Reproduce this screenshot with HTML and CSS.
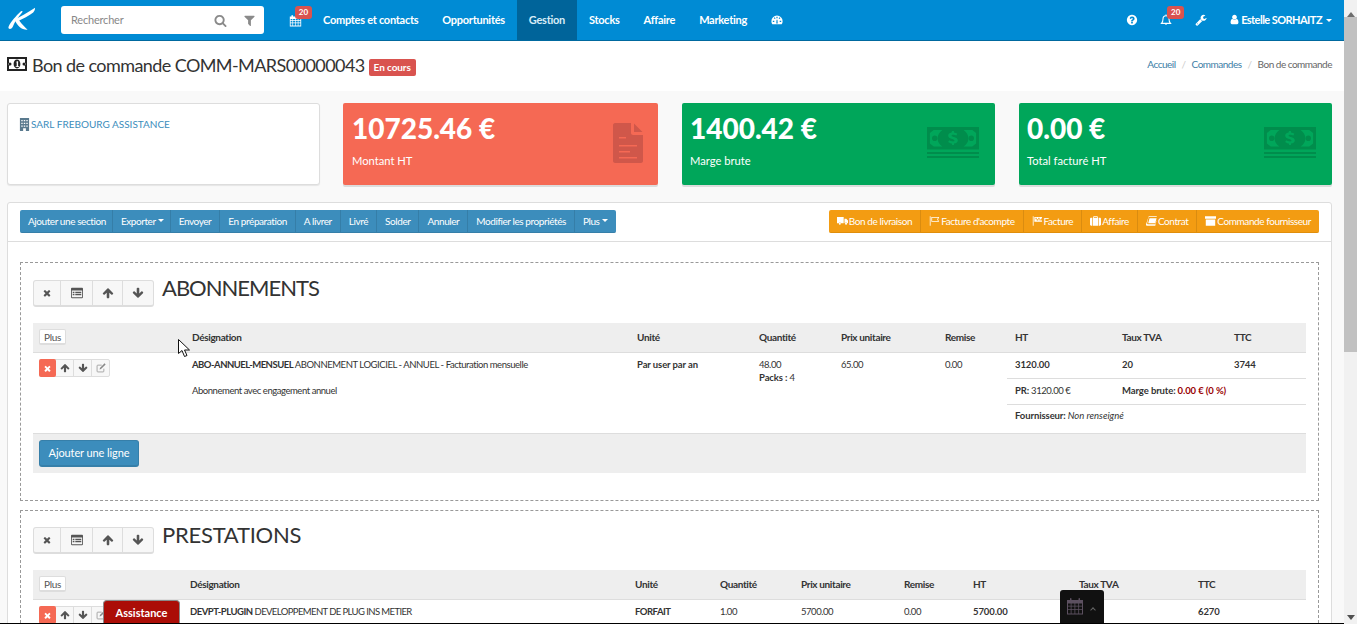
FILE: index.html
```html
<!DOCTYPE html>
<html lang="fr">
<head>
<meta charset="utf-8">
<title>Bon de commande</title>
<link rel="stylesheet" href="styles.css">
</head>
<body>
<svg class="sprite" xmlns="http://www.w3.org/2000/svg">
  <symbol id="i-search" viewBox="0 0 1792 1792"><path d="M1216 832q0-185-131.500-316.500t-316.500-131.500-316.500 131.500-131.500 316.500 131.500 316.500 316.500 131.500 316.500-131.500 131.500-316.500zm512 832q0 52-38 90t-90 38q-54 0-90-38l-343-342q-179 124-399 124-143 0-273.500-55.500t-225-150-150-225-55.500-273.500 55.500-273.500 150-225 225-150 273.500-55.500 273.500 55.500 225 150 150 225 55.500 273.500q0 220-124 399l343 343q37 37 37 90z"/></symbol>
  <symbol id="i-filter" viewBox="0 0 1792 1792"><path d="M1595 295q17 41-14 70l-493 493v742q0 42-39 59-13 5-25 5-27 0-45-19l-256-256q-19-19-19-45v-486l-493-493q-31-29-14-70 17-39 59-39h1280q42 0 59 39z"/></symbol>
  <symbol id="i-user" viewBox="0 0 1792 1792"><path d="M1536 1399q0 109-62.500 187t-150.500 78h-854q-88 0-150.500-78t-62.500-187q0-85 8.500-160.500t31.500-152 58.500-131 94-89 134.500-34.500q131 128 313 128t313-128q76 0 134.500 34.500t94 89 58.500 131 31.500 152 8.500 160.500zm-256-887q0 159-112.500 271.500t-271.500 112.500-271.500-112.500-112.500-271.500 112.500-271.500 271.500-112.500 271.500 112.500 112.500 271.500z"/></symbol>
  <symbol id="i-times" viewBox="0 0 1792 1792"><path d="M1490 1322q0 40-28 68l-136 136q-28 28-68 28t-68-28l-294-294-294 294q-28 28-68 28t-68-28l-136-136q-28-28-28-68t28-68l294-294-294-294q-28-28-28-68t28-68l136-136q28-28 68-28t68 28l294 294 294-294q28-28 68-28t68 28l136 136q28 28 28 68t-28 68l-294 294 294 294q28 28 28 68z"/></symbol>
  <symbol id="i-up" viewBox="0 0 1792 1792"><path d="M1675 971q0 51-37 90l-75 75q-38 38-91 38-54 0-90-38l-294-293v704q0 52-37.500 84.500t-90.500 32.500h-128q-53 0-90.500-32.500t-37.500-84.500v-704l-294 293q-36 38-90 38t-90-38l-75-75q-38-38-38-90 0-53 38-91l651-651q35-37 90-37 54 0 91 37l651 651q37 39 37 91z"/></symbol>
  <symbol id="i-down" viewBox="0 0 1792 1792"><path d="M1675 832q0 53-37 90l-651 652q-39 37-91 37-53 0-90-37l-651-652q-38-36-38-90 0-53 38-91l74-75q39-37 91-37 53 0 90 37l294 294v-704q0-52 38-90t90-38h128q52 0 90 38t38 90v704l294-294q37-37 90-37 52 0 91 37l75 75q37 39 37 91z"/></symbol>
  <symbol id="i-help" viewBox="0 0 1792 1792"><path d="M1024 1376v-192q0-14-9-23t-23-9h-192q-14 0-23 9t-9 23v192q0 14 9 23t23 9h192q14 0 23-9t9-23zm256-672q0-88-55.500-163t-138.500-116-170-41q-243 0-371 213-15 24 8 42l132 100q7 6 19 6 16 0 25-12 53-68 86-92 34-24 86-24 48 0 85.500 26t37.500 59q0 38-20 61t-68 45q-63 28-115.500 86.500t-52.500 125.500v36q0 14 9 23t23 9h192q14 0 23-9t9-23q0-19 21.500-49.500t54.500-49.500q32-18 49-28.500t46-35 44.500-48 28-60.500 12.500-81zm384 192q0 209-103 385.500t-279.500 279.500-385.500 103-385.500-103-279.500-279.500-103-385.500 103-385.500 279.500-279.500 385.500-103 385.500 103 279.500 279.500 103 385.500z"/></symbol>
  <symbol id="i-wrench" viewBox="0 0 1792 1792"><path d="M448 1472q0-26-19-45t-45-19-45 19-19 45 19 45 45 19 45-19 19-45zm644-420l-682 682q-37 37-90 37-52 0-91-37l-106-108q-38-36-38-90 0-53 38-91l681-681q39 98 114.500 173.500t173.500 114.500zm634-435q0 39-23 106-47 134-164.500 217.500t-258.500 83.500q-185 0-316.500-131.500t-131.500-316.500 131.500-316.500 316.500-131.500q58 0 121.500 16.500t107.500 46.500q16 11 16 28t-16 28l-293 169v224l193 107q5-3 79-48.500t135.500-81 70.500-35.500q15 0 23.500 10t8.500 25z"/></symbol>
  <symbol id="i-bell" viewBox="0 0 16 16"><path fill="none" stroke="currentColor" stroke-width="1.4" d="M2 12.500c1.500-1.500 2-3 2-6 0-2.500 1.800-4.300 4-4.300s4 1.800 4 4.300c0 3 .5 4.500 2 6z"/><path d="M6.500 13.500a1.600 1.600 0 0 0 3 0zM7.300 .6h1.400v1.500H7.300z"/></symbol>
  <symbol id="i-cal" viewBox="0 0 16 16"><path fill-rule="evenodd" d="M1 3h2V1.500h2V3h6V1.500h2V3h2v12.500H1zM2 6v1.800h2.200V6zm3 0v1.800h2.500V6zm3.300 0v1.800h2.500V6zm3.300 0v1.800H14V6zM2 8.600v2h2.200v-2zm3 0v2h2.500v-2zm3.300 0v2h2.500v-2zm3.300 0v2H14v-2zM2 11.400v2.900h2.200v-2.900zm3 0v2.900h2.500v-2.900zm3.300 0v2.900h2.500v-2.900zm3.300 0v2.900H14v-2.900z"/></symbol>
  <symbol id="i-gauge" viewBox="0 0 16 16"><path fill-rule="evenodd" d="M8 2a7.500 7.500 0 0 0-7.500 7.500c0 1.600.5 3.100 1.300 4.300h12.400c.8-1.200 1.300-2.700 1.300-4.300A7.500 7.500 0 0 0 8 2zM7.200 3.600h1.600v2H7.200zM3.700 5.200l1.200-.9 1.200 1.600-1.200.9zM2.400 9h2v1.500h-2zm9.200 0h2v1.500h-2zm-1.400-3.100 1.200-1.600 1.200.9-1.200 1.600zM7 12.500l.4-5h1.200l.4 5z"/></symbol>
  <symbol id="i-money" viewBox="0 0 20 14"><path fill-rule="evenodd" d="M0 0h20v14H0zm2 2v10h16V2zm8 .6c2 0 3.400 2 3.400 4.400s-1.400 4.400-3.400 4.400S6.600 9.400 6.600 7 8 2.600 10 2.600zM9 5l1.200-.8h.9v5h1v.8H8.700v-.8h1V5.600zM3 5.500a1.500 1.500 0 1 1 0 3 1.500 1.500 0 0 1 0-3zm14 0a1.500 1.500 0 1 1 0 3 1.500 1.500 0 0 1 0-3z"/></symbol>
  <symbol id="i-cash" viewBox="0 0 54 32" preserveAspectRatio="none"><path fill-rule="evenodd" d="M0 0h54v22.500H0zM3 6l4-3h9c-3 2-5 5-5 8.500s2 6 5 8H7l-4-3zm48 0-4-3h-9c3 2 5 5 5 8.500s-2 6-5 8h9l4-3zM26 4h2v1.500c1.500.2 2.500.6 3.500 1.300l-1 1.800c-1.500-.8-5-1.500-5 0 0 2 6.500 1 6.500 5 0 1.500-1.300 2.800-4 3V18h-2v-1.400c-1.500-.2-3-.8-4-1.600l1-1.800c1.500 1 5.500 2 5.500.3 0-2-6.500-1-6.500-5 0-1.500 1.300-2.700 3.500-3zM0 25h54v2H0zm0 4h54v2H0z"/><circle cx="8" cy="11.200" r="2.800"/><circle cx="46" cy="11.200" r="2.800"/></symbol>
  <symbol id="i-file" viewBox="0 0 30 40"><path fill-rule="evenodd" d="M2 0h16v10c0 1 1 2 2 2h10v26c0 1-1 2-2 2H2c-1 0-2-1-2-2V2C0 1 1 0 2 0zm4 14v1.500h7V14zm0 8v1.500h18V22zm0 6v1.500h11V28zm0 6v1.500h18V34zM21 .5 29.500 9H21z"/></symbol>
  <symbol id="i-building" viewBox="0 0 12 14"><path fill-rule="evenodd" d="M1 0h10v14H1zm1.500 2v1.500H4V2zm2.700 0v1.500h1.600V2zM8 2v1.500h1.500V2zM2.500 5v1.500H4V5zm2.700 0v1.500h1.600V5zM8 5v1.500h1.500V5zM2.500 8v1.500H4V8zm2.700 0v1.500h1.600V8zM8 8v1.500h1.500V8zM4.500 11v3h3v-3z"/></symbol>
  <symbol id="i-truck" viewBox="0 0 14 12"><path d="M0 1h8.500v8H5.300a1.800 1.800 0 0 0-3.400 0H0zM9.500 3h2.300L14 5.500V9h-.8a1.800 1.800 0 0 0-3.400 0h-.3zM3.600 8.300a1.300 1.300 0 1 1 0 2.600 1.300 1.300 0 0 1 0-2.600zm7.900 0a1.300 1.300 0 1 1 0 2.600 1.300 1.300 0 0 1 0-2.600z"/></symbol>
  <symbol id="i-flag" viewBox="0 0 14 12"><path fill-rule="evenodd" d="M1 0h1v12H1zm2 1h10l-1.500 3L13 7H3zm1 1v4h7.400l-1-2 1-2z"/></symbol>
  <symbol id="i-flagc" viewBox="0 0 14 12"><path fill-rule="evenodd" d="M1 0h1v12H1zm2 1h10l-1.500 3L13 7H3zm1.500 1v1.700H6V2zM8 2v1.700h1.600V2zM6 3.700v1.600h2V3.700zm3.600 0v1.600h1.500V3.700z"/></symbol>
  <symbol id="i-suit" viewBox="0 0 14 12"><path fill-rule="evenodd" d="M4 2V.8C4 .4 4.400 0 4.800 0h4.400c.4 0 .8.400.8.800V2h2.500c.8 0 1.500.7 1.500 1.500v7c0 .8-.7 1.500-1.500 1.500h-11C.7 12 0 11.300 0 10.500v-7C0 2.700.7 2 1.500 2zm1-1v1h4V1zM3 2v10h.8V2zm7.200 0v10h.8V2z"/></symbol>
  <symbol id="i-book" viewBox="0 0 14 12"><path d="M3.500 0H14l-.6 1H4.600c-1 0-1.400.7-1.700 1.700l-1.400 6c-.2.800.2 1.300 1 1.300h9.400l.9-3.800.7-1.200L11.800 12H1.500C.5 12-.2 11 0 10zM4.500 2.500h9l-1.800 6.500H2.800z"/></symbol>
  <symbol id="i-list" viewBox="0 0 14 12"><path d="M0 0h14v3H0zM1 4h12v8H1z"/></symbol>
  <symbol id="i-listalt" viewBox="0 0 14 12"><path fill-rule="evenodd" d="M1 0h12c.6 0 1 .4 1 1v10c0 .6-.4 1-1 1H1c-.6 0-1-.4-1-1V1c0-.6.4-1 1-1zm0 3v8h12V3zm1 1.500h2V6H2zm3 0h7V6H5zM2 7h2v1.500H2zm3 0h7v1.500H5z"/></symbol>
  <symbol id="i-edit" viewBox="0 0 14 14"><path fill="none" stroke="currentColor" stroke-width="1" d="M11 8v3.500c0 .6-.5 1-1 1H2.500c-.6 0-1-.4-1-1V4c0-.6.4-1 1-1H8"/><path d="M12 .5 13.500 2 7 8.500 5 9l.5-2z"/></symbol>
  <symbol id="i-calo" viewBox="0 0 18 18"><path fill-rule="evenodd" d="M1 3h3V1.500c0-.8 1.500-.8 1.500 0V3h7V1.500c0-.8 1.500-.8 1.500 0V3h3v14.500H1zM2 6.500v2.300h2.700V6.500zm3.500 0v2.300h3V6.500zm3.800 0v2.300h3V6.500zm3.800 0v2.300H16V6.500zM2 9.600v2.700h2.700V9.600zm3.500 0v2.700h3V9.600zm3.800 0v2.700h3V9.600zm3.800 0v2.700H16V9.600zM2 13.100v3.400h2.700v-3.400zm3.500 0v3.400h3v-3.400zm3.800 0v3.400h3v-3.400zm3.800 0v3.400H16v-3.400z"/></symbol>
</svg>

<div class="app">
  <div class="page">
    <nav class="navbar">
      <a class="brand">
        <svg class="logo" viewBox="0 0 30 26"><path d="M13 5C9 9 3 15 .5 21c-.5 2.500 3 3 4.500 0C7 16 11 10 15.500 5c.3-1.500-1.500-1.200-2.500 0z"/><path d="M7 13c6-3 14-7 22-12.500 0 2-.5 3.500-2 5-5 4-11 6.500-15 8.500 3 4 6 7 9 10-6 .5-11-4-14-11z"/></svg>
      </a>
      <div class="search">
        <span class="search-input">Rechercher</span>
        <span class="search-btn"><svg class="ic ic-13"><use href="#i-search"/></svg></span>
        <span class="search-btn"><svg class="ic ic-13"><use href="#i-filter"/></svg></span>
      </div>
      <ul class="menu">
        <li class="menu-icon cal-item"><svg class="ic ic-13"><use href="#i-cal"/></svg><span class="badge-n">20</span></li>
        <li>Comptes et contacts</li>
        <li>Opportunités</li>
        <li class="active">Gestion</li>
        <li>Stocks</li>
        <li>Affaire</li>
        <li>Marketing</li>
        <li class="menu-icon"><svg class="ic ic-12"><use href="#i-gauge"/></svg></li>
      </ul>
      <ul class="menu menu-right">
        <li class="menu-icon help-item"><svg class="ic ic-12"><use href="#i-help"/></svg></li>
        <li class="menu-icon bell-item"><svg class="ic ic-12"><use href="#i-bell"/></svg><span class="badge-n">20</span></li>
        <li class="menu-icon wrench-item"><svg class="ic ic-12"><use href="#i-wrench"/></svg></li>
        <li class="user"><svg class="ic ic-11"><use href="#i-user"/></svg>Estelle SORHAITZ<i class="caret"></i></li>
      </ul>
    </nav>

    <header class="head">
      <div class="head-title">
        <svg class="ic money"><use href="#i-money"/></svg>
        <h1>Bon de commande COMM-MARS00000043</h1>
        <span class="status">En cours</span>
      </div>
      <ol class="crumbs">
        <li><a>Accueil</a></li>
        <li class="sep">/</li>
        <li><a>Commandes</a></li>
        <li class="sep">/</li>
        <li>Bon de commande</li>
      </ol>
    </header>

    <main class="content">
      <section class="stats">
        <div class="client"><svg class="ic building"><use href="#i-building"/></svg><a>SARL FREBOURG ASSISTANCE</a></div>
        <div class="stat red">
          <strong>10725.46 €</strong><span>Montant HT</span>
          <svg class="ic stat-file"><use href="#i-file"/></svg>
        </div>
        <div class="stat green">
          <strong>1400.42 €</strong><span>Marge brute</span>
          <svg class="ic stat-cash"><use href="#i-cash"/></svg>
        </div>
        <div class="stat green">
          <strong>0.00 €</strong><span>Total facturé HT</span>
          <svg class="ic stat-cash"><use href="#i-cash"/></svg>
        </div>
      </section>

      <section class="panel">
        <div class="toolbar">
          <div class="btns blue">
            <a>Ajouter une section</a>
            <a>Exporter<i class="caret"></i></a>
            <a>Envoyer</a>
            <a>En préparation</a>
            <a>A livrer</a>
            <a>Livré</a>
            <a>Solder</a>
            <a>Annuler</a>
            <a>Modifier les propriétés</a>
            <a>Plus<i class="caret"></i></a>
          </div>
          <div class="btns orange">
            <a><svg class="ic ic-t"><use href="#i-truck"/></svg>Bon de livraison</a>
            <a><svg class="ic ic-t"><use href="#i-flag"/></svg>Facture d'acompte</a>
            <a><svg class="ic ic-t"><use href="#i-flagc"/></svg>Facture</a>
            <a><svg class="ic ic-t"><use href="#i-suit"/></svg>Affaire</a>
            <a><svg class="ic ic-t"><use href="#i-book"/></svg>Contrat</a>
            <a><svg class="ic ic-t"><use href="#i-list"/></svg>Commande fournisseur</a>
          </div>
        </div>

        <div class="panel-body">
          <article class="block">
            <div class="block-head">
              <div class="tools">
                <a class="t1"><svg class="ic ic-10"><use href="#i-times"/></svg></a>
                <a class="t2"><svg class="ic ic-12"><use href="#i-listalt"/></svg></a>
                <a class="t3"><svg class="ic ic-12"><use href="#i-up"/></svg></a>
                <a class="t4"><svg class="ic ic-12"><use href="#i-down"/></svg></a>
              </div>
              <h2 class="h-abo">ABONNEMENTS</h2>
            </div>
            <div class="thead cols-a">
              <div class="cell-plus"><a class="plus">Plus</a></div>
              <div>Désignation</div><div>Unité</div><div>Quantité</div><div>Prix unitaire</div><div>Remise</div><div>HT</div><div>Taux TVA</div><div>TTC</div>
            </div>
            <div class="trow rows-a">
              <div class="cell-act">
                <div class="mini">
                  <a class="del"><svg class="ic ic-9"><use href="#i-times"/></svg></a>
                  <a><svg class="ic ic-10"><use href="#i-up"/></svg></a>
                  <a><svg class="ic ic-10"><use href="#i-down"/></svg></a>
                  <a><svg class="ic ic-10 light"><use href="#i-edit"/></svg></a>
                </div>
              </div>
              <div class="cell"><p><b class="code">ABO-ANNUEL-MENSUEL</b> ABONNEMENT LOGICIEL - ANNUEL - Facturation mensuelle</p><p class="desc">Abonnement avec engagement annuel</p></div>
              <div class="cell"><b>Par user par an</b></div>
              <div class="cell"><p>48.00</p><p class="packs"><b>Packs :</b> 4</p></div>
              <div class="cell">65.00</div>
              <div class="cell">0.00</div>
              <div class="cell-right">
                <div class="sub sub-top"><b>3120.00</b><b>20</b><b>3744</b></div>
                <div class="sub sub-mid"><span><b>PR:</b> 3120.00 €</span><span class="marge"><b>Marge brute:</b> <b class="neg">0.00 € (0 %)</b></span></div>
                <div class="sub sub-last"><span><b>Fournisseur:</b> <em>Non renseigné</em></span></div>
              </div>
            </div>
            <div class="tfoot"><a class="add">Ajouter une ligne</a></div>
          </article>

          <article class="block">
            <div class="block-head">
              <div class="tools">
                <a class="t1"><svg class="ic ic-10"><use href="#i-times"/></svg></a>
                <a class="t2"><svg class="ic ic-12"><use href="#i-listalt"/></svg></a>
                <a class="t3"><svg class="ic ic-12"><use href="#i-up"/></svg></a>
                <a class="t4"><svg class="ic ic-12"><use href="#i-down"/></svg></a>
              </div>
              <h2 class="h-pre">PRESTATIONS</h2>
            </div>
            <div class="thead cols-b">
              <div class="cell-plus"><a class="plus">Plus</a></div>
              <div>Désignation</div><div>Unité</div><div>Quantité</div><div>Prix unitaire</div><div>Remise</div><div>HT</div><div>Taux TVA</div><div>TTC</div>
            </div>
            <div class="trow cols-b">
              <div class="cell-act">
                <div class="mini">
                  <a class="del"><svg class="ic ic-9"><use href="#i-times"/></svg></a>
                  <a><svg class="ic ic-10"><use href="#i-up"/></svg></a>
                  <a><svg class="ic ic-10"><use href="#i-down"/></svg></a>
                  <a><svg class="ic ic-10 light"><use href="#i-edit"/></svg></a>
                </div>
              </div>
              <div class="cell"><b class="code">DEVPT-PLUGIN</b> <span class="caps">DEVELOPPEMENT DE PLUG INS METIER</span></div>
              <div class="cell"><b class="code">FORFAIT</b></div>
              <div class="cell">1.00</div>
              <div class="cell">5700.00</div>
              <div class="cell">0.00</div>
              <div class="cell"><b>5700.00</b></div>
              <div class="cell"></div>
              <div class="cell"><b>6270</b></div>
            </div>
          </article>
        </div>
      </section>
    </main>

    <a class="assist">Assistance</a>
    <div class="dock"><svg class="ic dock-cal"><use href="#i-calo"/></svg><i class="chev"></i></div>
    <svg class="cursor" viewBox="0 0 13 18"><path d="M.5.5v14l3.500-3 2.500 6 2.500-1-2.500-5.500 5 0z" fill="#fff" stroke="#111" stroke-width="1"/></svg>
    <div class="edge"></div>
  </div>
  <div class="scrollbar">
    <i class="arrow-up"></i>
    <div class="thumb"></div>
    <i class="arrow-down"></i>
  </div>
</div>
</body>
</html>
```

FILE: styles.css
```css
* { box-sizing: border-box; }
html, body { margin: 0; height: 100%; overflow: hidden; }
body { font-family: "Lato", "Liberation Sans", sans-serif; font-size: 11px; color: #333; background: #f9f9f9; }
p, h1, h2, ul, ol { margin: 0; padding: 0; list-style: none; font-weight: 400; }
.sprite { display: none; }
.ic { display: inline-block; fill: currentColor; flex: none; }
.ic-9 { width: 9px; height: 9px; }
.ic-10 { width: 10px; height: 10px; }
.ic-11 { width: 11px; height: 11px; }
.ic-12 { width: 12px; height: 12px; }
.ic-13 { width: 13px; height: 13px; }
.ic-t { width: 11px; height: 10px; margin-right: 1px; }
.light { color: #888; }

.app { display: flex; height: 624px; }
.page { position: relative; width: 1344px; height: 624px; overflow: hidden; background: #f9f9f9; }

.scrollbar { width: 13px; background: #f1f1f1; display: flex; flex-direction: column; align-items: center; }
.thumb { width: 13px; height: 335px; background: #c1c1c1; }
.arrow-up { height: 17px; width: 0; border: 4px solid transparent; border-top-width: 6px; border-bottom: 5px solid #6e6e6e; border-top-color: transparent; }
.arrow-down { margin-top: 263px; width: 0; height: 0; border: 4px solid transparent; border-bottom: 0; border-top: 5px solid #505050; }

.navbar { display: flex; height: 41px; background: #008bd4; border-bottom: 1px solid #00699f; color: #fff; }
.brand { width: 61px; padding: 7px 0 0 8px; }
.logo { display: block; width: 28px; height: 25px; fill: #fff; }
.search { display: flex; width: 203px; height: 28px; margin-top: 6px; background: #fff; border-radius: 3px; color: #888; }
.search-input { flex: 1; padding-left: 10px; line-height: 28px; font-size: 11px; letter-spacing: -.2px; color: #888; }
.search-btn { width: 29px; display: flex; align-items: center; justify-content: center; color: #8a8a8a; }
.menu { display: flex; margin-left: 13px; height: 40px; font-size: 11px; font-weight: 700; letter-spacing: -.27px; }
.menu li { position: relative; padding: 0 12px; line-height: 40px; white-space: nowrap; }
.menu .active { background: #00649a; color: #d8ecf7; }
.menu-icon { display: flex; align-items: center; }
.cal-item { width: 34px; }
.badge-n { position: absolute; top: 6px; left: 18px; width: 17px; height: 13px; background: #d9534f; border-radius: 3px; color: #fff; font-size: 8px; font-weight: 700; letter-spacing: 0; line-height: 13px; text-align: center; }
.menu-right { margin-left: auto; margin-right: 0; }
.menu-right .help-item { padding: 0; margin-right: 22px; }
.menu-right .bell-item { padding: 0; margin-right: 23px; }
.bell-item .badge-n { left: 7px; }
.menu-right .wrench-item { padding: 0; margin-right: 22px; }
.menu-right .user { padding: 0 12px 0 0; letter-spacing: -.55px; }
.user .ic { margin-right: 1px; vertical-align: -1px; }
.caret { display: inline-block; width: 0; height: 0; margin-left: 4px; vertical-align: 2px; border: 3px solid transparent; border-bottom: 0; border-top: 3px solid currentColor; }

.head { display: flex; justify-content: space-between; align-items: center; height: 50px; padding: 0 12px 0 7px; background: #fff; }
.head-title { display: flex; align-items: center; }
.money { width: 20px; height: 14px; margin: -4px 5px 0 0; color: #222; }
h1 { font-size: 18px; letter-spacing: -.58px; color: #333; line-height: 24px; margin-top: -2px; }
.status { margin-left: 4px; margin-top: 3px; padding: 0 5px; height: 17px; line-height: 17px; background: #d9534f; border-radius: 2px; color: #fff; font-size: 10px; font-weight: 700; letter-spacing: -.1px; }
.crumbs { display: flex; font-size: 10px; letter-spacing: -.5px; color: #666; margin-top: -4px; }
.crumbs a { color: #3c7ea6; }
.sep { color: #ccc; margin: 0 6px; }

.content { padding: 12px 12px 0 7px; }
.stats { display: grid; grid-template-columns: 312px 315px 313px 313px; column-gap: 24px; height: 82px; margin-bottom: 17px; }
.client { margin-right: -1px; background: #fff; border: 1px solid #ddd; border-radius: 3px; box-shadow: 0 1px 1px rgba(0,0,0,.08); padding: 14px 11px; font-size: 10px; color: #3c8dbc; }
.building { width: 11px; height: 13px; margin-right: 1px; vertical-align: -3px; color: #5a7a8e; }
.stat { position: relative; border-radius: 2px; box-shadow: 0 2px 0 #dcdcdc; color: #fff; padding: 8px 9px; display: flex; flex-direction: column; }
.stat strong { font-size: 28px; line-height: 34px; font-weight: 900; }
.stat span { margin-top: 8px; font-size: 11.200px; line-height: 16px; }
.red { background: #f56954; }
.green { background: #00a65a; padding-left: 8px; }
.stat-file { position: absolute; right: 15px; top: 20px; width: 30px; height: 40px; color: #d0574a; }
.stat-cash { position: absolute; right: 16px; top: 24px; width: 52px; height: 32px; color: #008d4c; }

.panel { background: #fff; border: 1px solid #ddd; border-radius: 3px 3px 0 0; min-height: 480px; }
.toolbar { display: flex; justify-content: space-between; height: 39px; padding: 7px 12px 0; border-bottom: 1px solid #ddd; }
.btns { display: flex; height: 23px; border-radius: 2px; color: #fff; font-size: 10px; letter-spacing: -.42px; }
.btns a { display: flex; align-items: center; padding: 0 8px 1px; line-height: 22px; white-space: nowrap; }
.btns a + a { border-left: 1px solid rgba(0,0,0,.1); }
.blue a:first-child, .blue a:nth-child(2) { padding-right: 6px; }
.blue { background: #3c8dbc; border-bottom: 1px solid #367fa9; }
.orange { background: #f39c12; border-bottom: 1px solid #e08e0b; }
.btns .caret { margin-left: 2px; vertical-align: 1px; }

.panel-body { padding: 20px 12px 0; }
.block { border: 1px dashed #999; padding: 17px 12px 27px; margin-bottom: 9px; }
.block + .block { padding-top: 16px; }
.block-head { display: flex; height: 43px; }
.tools { display: flex; height: 27px; width: 121px; margin-right: 8px; border: 1px solid #ddd; border-bottom-width: 2px; border-radius: 3px; background: #f7f7f7; color: #555; }
.tools a { display: flex; align-items: center; justify-content: center; border-right: 1px solid #ddd; }
.tools a:last-child { border-right: 0; }
.t1 { width: 27px; } .t2 { width: 32px; } .t3 { width: 30px; } .t4 { flex: 1; }
h2 { font-size: 22px; height: 27px; line-height: 16px; color: #333; }
.h-abo { letter-spacing: -1px; }
.h-pre { letter-spacing: -.25px; }
.thead { display: grid; height: 30px; background: #eee; border-bottom: 1px solid #ddd; line-height: 29px; font-size: 10px; font-weight: 700; letter-spacing: -.35px; }
.thead > div:not(.cell-plus) { padding-left: 8px; }
.cell-plus { padding: 6px 0 0 6px; }
.plus { display: block; width: 27px; height: 16px; background: #fff; border: 1px solid #ddd; border-bottom-width: 2px; border-radius: 2px; font-size: 10px; font-weight: 400; line-height: 14px; text-align: center; color: #555; }
.cols-a { grid-template-columns: 151px 445px 122px 82px 104px 70px 107px 112px 80px; }
.cols-b { grid-template-columns: 149px 445px 85px 81px 103px 69px 106px 119px 116px; }
.trow { display: grid; height: 80px; font-size: 9.500px; letter-spacing: -.45px; }
.rows-a { grid-template-columns: 151px 445px 122px 82px 104px 70px 299px; }
.trow b { letter-spacing: -.1px; }
.trow .code { letter-spacing: -.5px; }
.caps { letter-spacing: -.6px; }
.trow em { letter-spacing: 0; }
.cell { padding: 5px 8px 0; line-height: 13px; }
.cell-act { padding: 6px 0 0 6px; }
.mini { display: flex; width: 71px; height: 18px; border: 1px solid #ddd; border-radius: 2px; color: #555; background: #f7f7f7; }
.mini a { flex: 1; display: flex; align-items: center; justify-content: center; border-right: 1px solid #ddd; }
.mini a:last-child { border-right: 0; }
.mini .del { margin: -1px 0 -1px -1px; flex: 0 0 17px; background: #f56954; color: #fff; border: 0; border-radius: 2px; }
.desc { margin-top: 13px; }
.packs { margin-top: 0; }
.sub { display: grid; grid-template-columns: 107px 112px 80px; padding-left: 8px; align-items: center; border-bottom: 1px solid #ddd; }
.sub-top { height: 26px; padding-bottom: 2px; }
.sub-mid { height: 26px; padding-bottom: 2px; grid-template-columns: 107px 192px; }
.sub-last { height: 28px; padding-top: 5px; align-items: start; border-bottom: 0; grid-template-columns: 1fr; }
.neg { color: #900; }
.tfoot { height: 40px; background: #eee; border-top: 1px solid #ddd; padding: 6px 6px 0; }
.add { display: inline-block; width: 100px; height: 27px; background: #3c8dbc; border: 1px solid #367fa9; border-bottom-width: 2px; border-radius: 3px; color: #fff; font-size: 11px; letter-spacing: -.1px; line-height: 24px; text-align: center; }

.assist { position: absolute; left: 103px; top: 600px; width: 77px; height: 24px; background: #ab0d07; border: 1px solid #8a8a8a; border-bottom: 0; border-radius: 4px 4px 0 0; color: #fff; font-size: 11px; font-weight: 700; line-height: 24px; text-align: center; }
.dock { position: absolute; left: 1060px; top: 590px; width: 44px; height: 34px; background: #111; border-radius: 3px 3px 0 0; display: flex; align-items: flex-start; padding: 7px 0 0 6px; }
.dock-cal { width: 18px; height: 18px; color: #5c5060; }
.chev { width: 4px; height: 4px; margin-left: 7px; margin-top: 11px; border-left: 1px solid #666; border-top: 1px solid #666; transform: rotate(45deg); }
.cursor { position: absolute; left: 178px; top: 339px; width: 13px; height: 18px; }
.edge { position: absolute; left: 0; right: 0; bottom: 0; height: 1px; background: #000; }
```
